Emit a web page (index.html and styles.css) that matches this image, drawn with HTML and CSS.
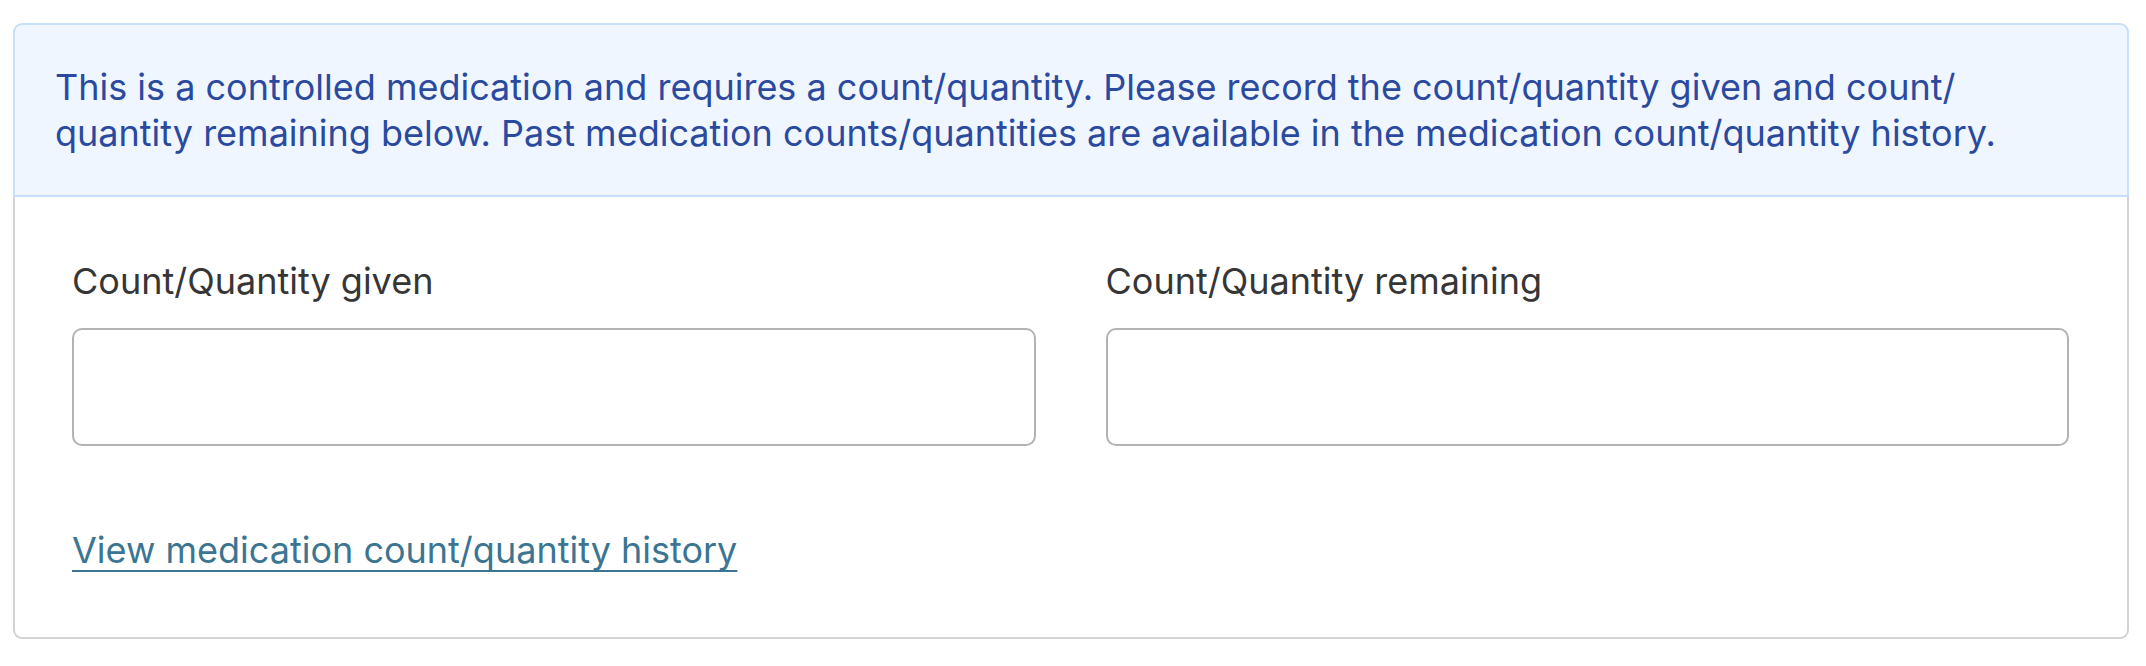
FILE: index.html
```html
<!DOCTYPE html>
<html lang="en">
<head>
<meta charset="utf-8">
<title>Controlled medication count</title>
<link rel="stylesheet" href="styles.css">
</head>
<body>
<section class="card">
  <div class="alert">
    This is a controlled medication and requires a count/quantity. Please record the count/quantity given and count/<wbr>quantity remaining below. Past medication counts/quantities are available in the medication count/quantity history.
  </div>
  <div class="body">
    <div class="fields">
      <div class="field">
        <label class="label" for="given">Count/Quantity given</label>
        <input class="input" id="given" type="text">
      </div>
      <div class="field">
        <label class="label" for="remaining">Count/Quantity remaining</label>
        <input class="input" id="remaining" type="text">
      </div>
    </div>
    <a class="link" href="#">View medication count/quantity history</a>
  </div>
</section>
</body>
</html>
```

FILE: styles.css
```css
* { box-sizing: border-box; }
html, body { margin: 0; padding: 0; background: #ffffff; }
body {
  font-family: Inter, "Noto Sans", sans-serif;
  font-size: 36px;
  line-height: 46px;
}
.card {
  width: 2116px;
  margin: 23px 17px 0 13px;
}
.alert {
  background: #eff6ff;
  border: 2px solid #c8dff8;
  border-radius: 9px 9px 0 0;
  padding: 39px 40px 39px 40px;
  color: #2b4a9f;
}
.body {
  border: 2px solid #d3d3d3;
  border-top: none;
  border-radius: 0 0 9px 9px;
  padding: 61px 58px 64px 57px;
}
.fields {
  display: grid;
  grid-template-columns: 1fr 1fr;
  column-gap: 70px;
}
.field {
  display: flex;
  flex-direction: column;
}
.label {
  color: #363636;
  margin-bottom: 24px;
}
.input {
  height: 118px;
  border: 2px solid #b3b3b3;
  border-radius: 10px;
  background: #fff;
  font: inherit;
  padding: 0 20px;
  outline: none;
}
.link {
  display: inline-block;
  margin-top: 81px;
  color: #3b7592;
  text-decoration: underline;
  text-decoration-thickness: 2px;
  text-underline-offset: 7px;
}
```
